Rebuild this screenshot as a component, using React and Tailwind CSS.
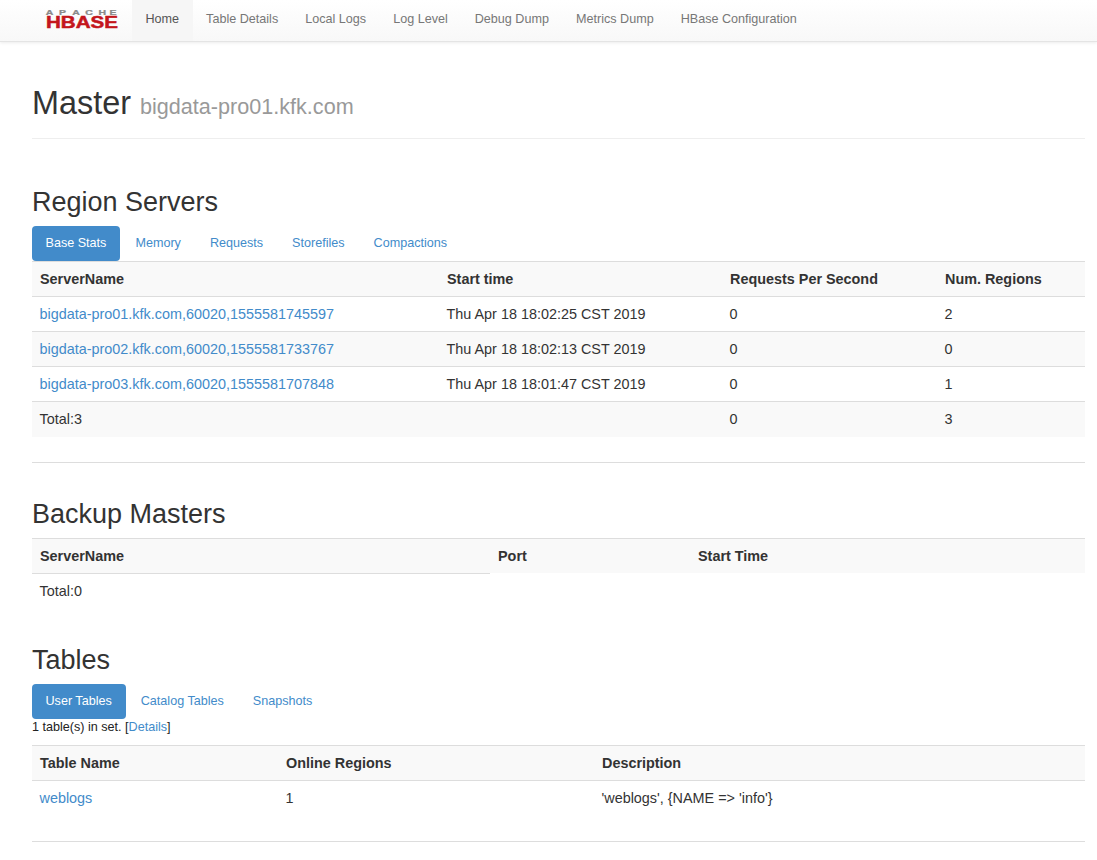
const navLinks = ["Table Details", "Local Logs", "Log Level", "Debug Dump", "Metrics Dump", "HBase Configuration"];

const regionRows = [
  ["bigdata-pro01.kfk.com,60020,1555581745597", "Thu Apr 18 18:02:25 CST 2019", "0", "2"],
  ["bigdata-pro02.kfk.com,60020,1555581733767", "Thu Apr 18 18:02:13 CST 2019", "0", "0"],
  ["bigdata-pro03.kfk.com,60020,1555581707848", "Thu Apr 18 18:01:47 CST 2019", "0", "1"],
];

const HBaseLogo = () => (
  <svg width="74" height="26" viewBox="0 0 74 26" className="block">
    <text transform="scale(1.5 1)" x="0.5 9.3 18.1 26.9 35.7 43" y="9" fontSize="7" fontWeight="700" fill="#8a8a8a" stroke="#8a8a8a" strokeWidth="0.25" fontFamily="'Liberation Sans', sans-serif">APACHE</text>
    <text x="1" y="22" textLength="72" lengthAdjust="spacingAndGlyphs" fontSize="16.5" fontWeight="700" fill="#c4161c" stroke="#c4161c" strokeWidth="0.5" fontFamily="'Liberation Sans', sans-serif">HBASE</text>
  </svg>
);

const Tabs = ({ items }) => (
  <ul className="flex h-[35px] text-[12.6px] text-[#428bca]">
    {items.map((item, i) => (
      <li
        key={item}
        className={i === 0 ? "mr-[0.5px] rounded-[4px] bg-[#428bca] pl-[13.5px] pr-[14px] leading-[35px] text-white" : "px-[14.5px] leading-[35px]"}
      >
        {item}
      </li>
    ))}
  </ul>
);

const Th = ({ children, className = "" }) => (
  <th className={`h-[35px] bg-[#f9f9f9] px-2 pt-[2px] text-left font-bold ${className}`}>{children}</th>
);

const Td = ({ children, className = "" }) => (
  <td className={`h-[35px] border-t border-[#dddddd] px-[7.5px] pt-[2px] ${className}`}>{children}</td>
);

const App = () => {
  return (
    <div className="min-h-[860px] overflow-hidden bg-white font-['Liberation_Sans',Arial,sans-serif] text-[14.4px] text-[#333333]">
      <nav className="flex h-[42px] border-b border-[#e4e4e4] bg-gradient-to-b from-white to-[#f8f8f8] shadow-[0_1px_3px_rgba(0,0,0,0.08)]">
        <div className="ml-[45px] mr-[13px] flex items-center pb-[3px]">
          <HBaseLogo />
        </div>
        <ul className="flex text-[12.6px] text-[#777777]">
          <li className="bg-[#f6f6f6] px-[13.5px] leading-[38px] text-[#555555]">Home</li>
          {navLinks.map((link) => (
            <li key={link} className="px-[13.5px] leading-[38px]">{link}</li>
          ))}
        </ul>
      </nav>

      <div className="ml-[32px] mr-[12px]">
        <div className="mt-[41px] border-b border-[#eeeeee] pb-[11px]">
          <h1 className="text-[32.4px] leading-[40px] text-[#333333]">
            Master <span className="text-[21.6px] text-[#999999]">bigdata-pro01.kfk.com</span>
          </h1>
        </div>

        <section>
          <h2 className="mt-[47px] mb-[7px] text-[27px] leading-[33px]">Region Servers</h2>
          <Tabs items={["Base Stats", "Memory", "Requests", "Storefiles", "Compactions"]} />
          <table className="w-full table-fixed border-t border-[#dddddd]">
            <colgroup>
              <col className="w-[407px]" />
              <col className="w-[283px]" />
              <col className="w-[215px]" />
              <col />
            </colgroup>
            <thead>
              <tr>
                <Th>ServerName</Th>
                <Th>Start time</Th>
                <Th>Requests Per Second</Th>
                <Th>Num. Regions</Th>
              </tr>
            </thead>
            <tbody>
              {regionRows.map((row, i) => (
                <tr key={row[0]} className={i % 2 === 1 ? "bg-[#f9f9f9]" : ""}>
                  <Td className="text-[#428bca]">{row[0]}</Td>
                  <Td>{row[1]}</Td>
                  <Td>{row[2]}</Td>
                  <Td>{row[3]}</Td>
                </tr>
              ))}
              <tr className="bg-[#f9f9f9]">
                <Td>Total:3</Td>
                <Td />
                <Td>0</Td>
                <Td>3</Td>
              </tr>
            </tbody>
          </table>
        </section>

        <hr className="mt-[25px] border-[#dddddd]" />

        <section>
          <h2 className="mt-[35px] mb-[7px] text-[27px] leading-[33px]">Backup Masters</h2>
          <table className="w-full table-fixed border-t border-[#dddddd]">
            <colgroup>
              <col className="w-[458px]" />
              <col className="w-[200px]" />
              <col />
            </colgroup>
            <thead>
              <tr>
                <Th className="border-b border-[#dddddd]">ServerName</Th>
                <Th>Port</Th>
                <Th>Start Time</Th>
              </tr>
            </thead>
            <tbody>
              <tr>
                <td className="h-[35px] px-[7.5px] pt-[2px]">Total:0</td>
                <td />
                <td />
              </tr>
            </tbody>
          </table>
        </section>

        <section>
          <h2 className="mt-[36px] mb-[7px] text-[27px] leading-[33px]">Tables</h2>
          <Tabs items={["User Tables", "Catalog Tables", "Snapshots"]} />
          <p className="text-[12.6px] leading-[16px] text-[#222222]">
            1 table(s) in set. [<span className="text-[#428bca]">Details</span>]
          </p>
          <table className="mt-[10px] w-full table-fixed border-t border-[#dddddd]">
            <colgroup>
              <col className="w-[246px]" />
              <col className="w-[316px]" />
              <col />
            </colgroup>
            <thead>
              <tr>
                <Th>Table Name</Th>
                <Th>Online Regions</Th>
                <Th>Description</Th>
              </tr>
            </thead>
            <tbody>
              <tr>
                <Td className="text-[#428bca]">weblogs</Td>
                <Td>1</Td>
                <Td>'weblogs', {"{NAME => 'info'}"}</Td>
              </tr>
            </tbody>
          </table>
        </section>

        <hr className="mt-[25px] border-[#dddddd]" />
      </div>
    </div>
  );
};

export default App;
